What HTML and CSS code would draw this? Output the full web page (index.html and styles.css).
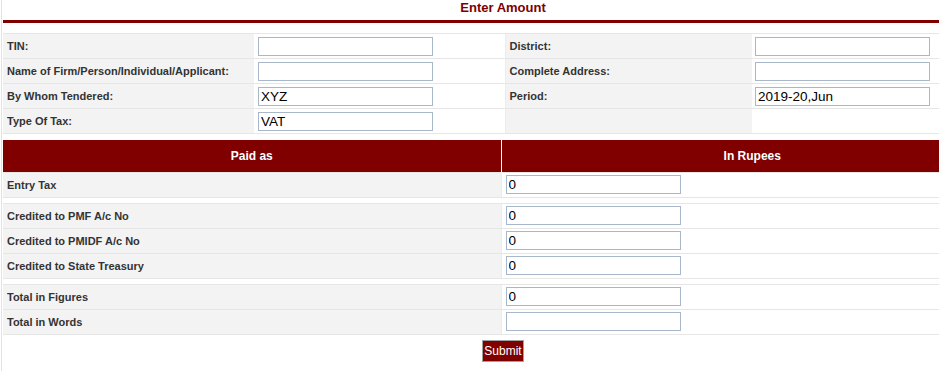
FILE: index.html
```html
<!DOCTYPE html>
<html lang="en">
<head>
  <meta charset="UTF-8">
  <title>Enter Amount</title>
  <link rel="stylesheet" href="styles.css">
</head>
<body>
  <div class="page">
    <h3 class="title">Enter Amount</h3>

    <table class="info">
      <colgroup>
        <col class="c1"><col class="c2"><col class="c3"><col>
      </colgroup>
      <tr>
        <td class="lbl">TIN:</td>
        <td class="val"><input type="text"></td>
        <td class="lbl">District:</td>
        <td class="val"><input type="text"></td>
      </tr>
      <tr>
        <td class="lbl">Name of Firm/Person/Individual/Applicant:</td>
        <td class="val"><input type="text"></td>
        <td class="lbl">Complete Address:</td>
        <td class="val"><input type="text"></td>
      </tr>
      <tr>
        <td class="lbl">By Whom Tendered:</td>
        <td class="val"><input type="text" value="XYZ"></td>
        <td class="lbl">Period:</td>
        <td class="val"><input type="text" value="2019-20,Jun"></td>
      </tr>
      <tr>
        <td class="lbl">Type Of Tax:</td>
        <td class="val"><input type="text" value="VAT"></td>
        <td class="lbl"></td>
        <td class="val"></td>
      </tr>
    </table>

    <table class="amounts">
      <colgroup>
        <col class="half"><col>
      </colgroup>
      <tr>
        <th>Paid as</th>
        <th>In Rupees</th>
      </tr>
      <tr>
        <td class="lbl">Entry Tax</td>
        <td class="val"><input type="text" value="0"></td>
      </tr>
      <tr class="gap"><td colspan="2"></td></tr>
      <tr>
        <td class="lbl">Credited to PMF A/c No</td>
        <td class="val"><input type="text" value="0"></td>
      </tr>
      <tr>
        <td class="lbl">Credited to PMIDF A/c No</td>
        <td class="val"><input type="text" value="0"></td>
      </tr>
      <tr>
        <td class="lbl">Credited to State Treasury</td>
        <td class="val"><input type="text" value="0"></td>
      </tr>
      <tr class="gap"><td colspan="2"></td></tr>
      <tr>
        <td class="lbl">Total in Figures</td>
        <td class="val"><input type="text" value="0"></td>
      </tr>
      <tr>
        <td class="lbl">Total in Words</td>
        <td class="val"><input type="text"></td>
      </tr>
    </table>

    <div class="actions">
      <button type="button">Submit</button>
    </div>
  </div>
</body>
</html>
```

FILE: styles.css
```css
* {
  box-sizing: border-box;
}

html, body {
  overflow: hidden;
}

body {
  margin: 0;
  padding-left: 1px;
  font-family: 'Liberation Sans', Arial, sans-serif;
  color: #333;
  background: #fff;
}

.page {
  width: 1002px;
  min-height: 100vh;
  border-left: 1px solid #e2e2e2;
  padding-left: 1px;
}

.title {
  margin: 0;
  font-size: 13px;
  line-height: 15px;
  font-weight: bold;
  text-align: center;
  color: #7d0000;
  padding-bottom: 5px;
  border-bottom: 3px solid #800000;
}

table {
  width: 100%;
  border-collapse: collapse;
  table-layout: fixed;
}

td {
  height: 25px;
  padding: 0 4px;
  border-top: 1px solid #e6e6e6;
  border-bottom: 1px solid #e6e6e6;
  font-size: 11px;
  font-weight: bold;
  vertical-align: middle;
}

td.lbl {
  background: #f3f3f3;
}

td.val {
  background: #fff;
}

td.val input {
  display: block;
  width: 175px;
  height: 19px;
  padding: 0 2px;
  border: 1px solid #a9b7cb;
  font-family: 'Liberation Sans', Arial, sans-serif;
  font-size: 13.5px;
  color: #000;
}

.info {
  margin-top: 10px;
}

.info col.c1,
.info col.c2 {
  width: 251px;
}

.info col.c3 {
  width: 247px;
}

.info td:nth-child(3) {
  border-left: 1px solid #ececec;
}

.info td:nth-child(4) {
  padding-left: 3px;
}

.amounts {
  margin-top: 6px;
}

.amounts col.half {
  width: 498px;
}

.amounts th {
  height: 32px;
  background: #800000;
  color: #fff;
  font-size: 12px;
  font-weight: bold;
  text-align: center;
}

.amounts th + th {
  border-left: 1px solid #fff;
}

.amounts td.val {
  border-left: 1px solid #ececec;
}

.amounts tr.gap td {
  height: 6px;
  padding: 0;
  background: #fff;
}

.actions {
  text-align: center;
  padding-top: 5px;
}

.actions button {
  height: 22px;
  padding: 0 1px;
  background: #800000;
  color: #fff;
  border: 1px solid #a0a0a0;
  font-family: 'Liberation Sans', Arial, sans-serif;
  font-size: 12px;
}
```
